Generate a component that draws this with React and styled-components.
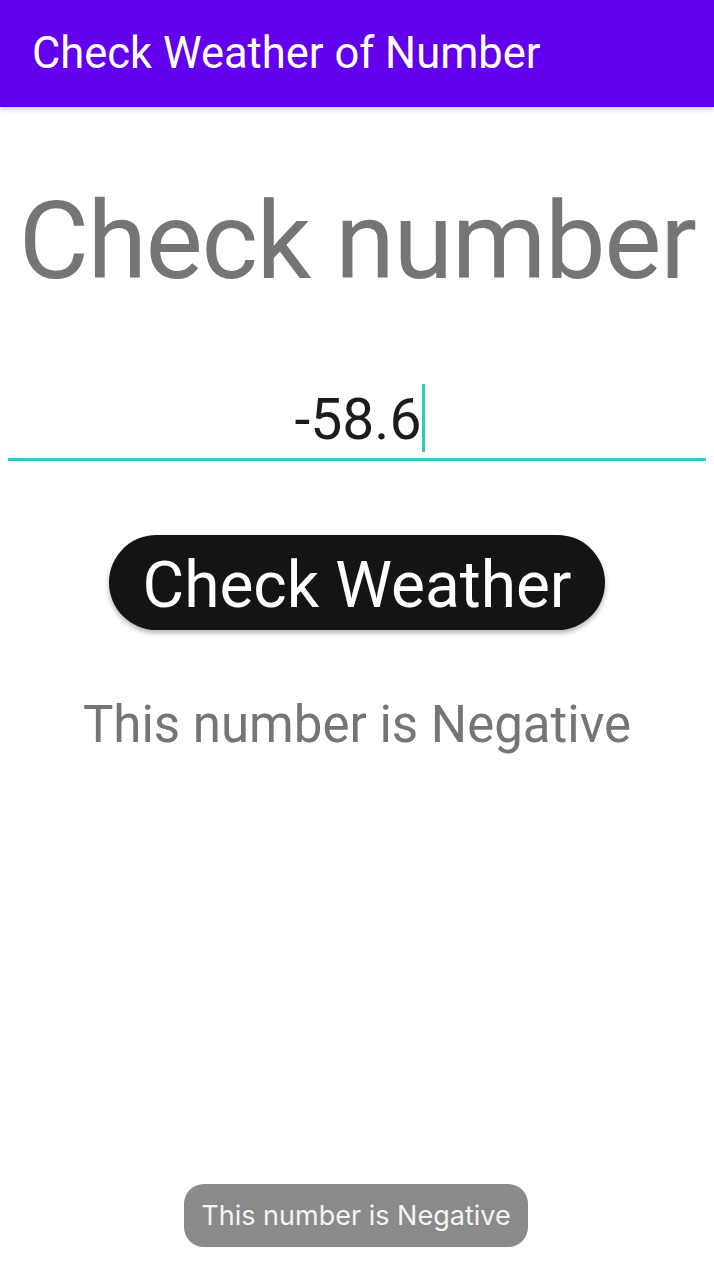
import styled, { createGlobalStyle } from "styled-components";

const GlobalStyle = createGlobalStyle`
  html, body {
    margin: 0;
    padding: 0;
    background: #fff;
    font-family: Roboto, "Noto Sans", sans-serif;
  }
`;

const App = () => {
  return (
    <Page>
      <GlobalStyle />
      <AppBar>
        <AppTitle>Check Weather of Number</AppTitle>
      </AppBar>

      <Content>
        <Heading>Check number</Heading>
        <Field>
          <FieldText>-58.6</FieldText>
          <Caret />
        </Field>
        <CheckButton>Check Weather</CheckButton>
        <Result>This number is Negative</Result>
      </Content>

      <Toast>This number is Negative</Toast>
    </Page>
  );
};

export default App;

const Page = styled.div`
  position: relative;
  width: 714px;
  height: 1280px;
  overflow: hidden;
  background: #fff;
`;

const AppBar = styled.div`
  height: 107px;
  background: #6200ee;
  display: flex;
  align-items: center;
  padding-left: 32px;
  box-shadow: 0 2px 5px rgba(0, 0, 0, 0.22);
  position: relative;
  z-index: 1;
`;

const AppTitle = styled.h1`
  margin: 0;
  color: #fff;
  font-family: Roboto, sans-serif;
  font-weight: 400;
  font-size: 43.5px;
  letter-spacing: 0;
  white-space: nowrap;
`;

const Content = styled.div`
  display: flex;
  flex-direction: column;
  align-items: center;
  padding: 0 8px;
`;

const Heading = styled.h2`
  margin: 69px 0 0;
  color: #757575;
  font-family: Roboto, sans-serif;
  font-weight: 400;
  font-size: 108px;
  line-height: 130px;
  letter-spacing: -1.4px;
  white-space: nowrap;
`;

const Field = styled.div`
  margin-top: 76px;
  width: 100%;
  height: 76px;
  border-bottom: 3px solid #2bc8c6;
  display: flex;
  justify-content: center;
  align-items: flex-start;
`;

const FieldText = styled.span`
  color: #1c1c1c;
  font-family: Roboto, sans-serif;
  font-size: 57px;
  line-height: 72px;
  padding-top: 2px;
  margin-left: 6px;
`;

const Caret = styled.span`
  width: 3px;
  height: 68px;
  margin-top: 2px;
  margin-left: 1px;
  background: #2bc8c6;
`;

const CheckButton = styled.button`
  margin-top: 74px;
  width: 496px;
  height: 95px;
  padding: 6px 0 0;
  border: none;
  border-radius: 48px;
  background: #151413;
  color: #fff;
  font-family: Roboto, sans-serif;
  font-size: 64px;
  box-shadow: 0 3px 5px rgba(0, 0, 0, 0.3);
  cursor: pointer;
`;

const Result = styled.p`
  margin: 64px 0 0;
  color: #757575;
  font-family: Roboto, sans-serif;
  font-size: 51px;
  line-height: 62px;
  white-space: nowrap;
`;

const Toast = styled.div`
  position: absolute;
  left: 184px;
  top: 1184px;
  width: 344px;
  height: 63px;
  border-radius: 20px;
  background: #8a8a8a;
  color: #f4f4f4;
  font-family: Inter, sans-serif;
  font-size: 27px;
  display: flex;
  align-items: center;
  justify-content: center;
`;
